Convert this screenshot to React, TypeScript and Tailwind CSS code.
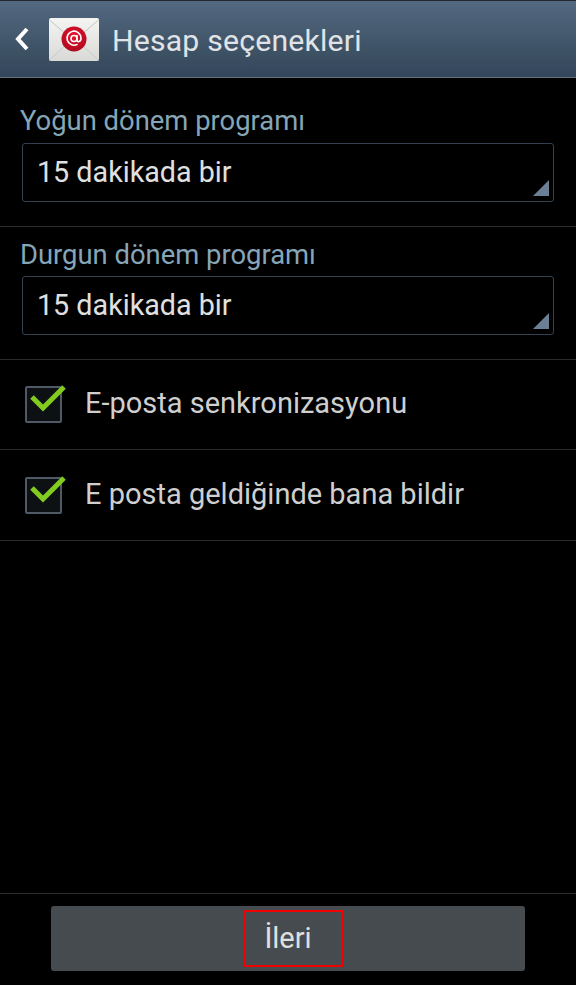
import React from 'react';

function MailIcon() {
  return (
    <svg width="52" height="45" viewBox="0 0 52 45" className="shrink-0">
      <defs>
        <linearGradient id="env" x1="0" y1="0" x2="0" y2="1">
          <stop offset="0" stopColor="#f4f4f3" />
          <stop offset="1" stopColor="#d9d9d7" />
        </linearGradient>
        <radialGradient id="seal" cx="0.5" cy="0.35" r="0.7">
          <stop offset="0" stopColor="#e8112d" />
          <stop offset="1" stopColor="#a80a1e" />
        </radialGradient>
      </defs>
      <rect x="1" y="1" width="50" height="43" rx="2" fill="url(#env)" />
      <path d="M1.5 3 L26 24 L50.5 3" fill="none" stroke="#c4c4c2" strokeWidth="1" />
      <path d="M1.5 43 L19 27 M50.5 43 L33 27" fill="none" stroke="#c9c9c7" strokeWidth="1" />
      <circle cx="26" cy="22" r="12.5" fill="url(#seal)" />
      <circle cx="26" cy="21.5" r="3" fill="none" stroke="#fff" strokeWidth="1.6" />
      <path d="M29 18.5 V23 Q29 25 31 24.5 Q33 24 33 21 A7 7 0 1 0 29 27.5" fill="none" stroke="#fff" strokeWidth="1.6" strokeLinecap="round" />
    </svg>
  );
}

function SpinnerField({ label, value, className, boxMargin }: { label: string; value: string; className: string; boxMargin: string }) {
  return (
    <div className={`border-b border-[#2b2b2b] ${className}`}>
      <div className="pl-5 text-[27.4px] leading-[30px] text-[#86a6b8]">{label}</div>
      <div className={`relative ml-[22px] mr-[22px] flex h-[59px] items-center rounded-[3px] border border-[#33414e] pl-[14px] pt-[1px] text-[28.7px] text-[#e0e0e0] ${boxMargin}`}>
        {value}
        <div className="absolute bottom-[5px] right-[4px] h-4 w-4 bg-[#6b7f97] [clip-path:polygon(100%_0,100%_100%,0_100%)]" />
      </div>
    </div>
  );
}

function CheckRow({ label, className }: { label: string; className: string }) {
  return (
    <div className={`flex items-center border-b border-[#2b2b2b] pl-[25px] ${className}`}>
      <div className="relative h-[37px] w-[37px] rounded-[2px] border-2 border-[#4f5a66] bg-[#0e1114]">
        <svg width="38" height="32" viewBox="0 0 38 32" className="absolute left-[3px] top-[-5px]">
          <path d="M2 14 L13 25 L34 4" fill="none" stroke="#82cc1f" strokeWidth="5" />
        </svg>
      </div>
      <span className="ml-[23px] pb-[1px] text-[29px] text-[#cfcfcf]">{label}</span>
    </div>
  );
}

export default function App() {
  return (
    <div className="flex h-[985px] w-[576px] flex-col overflow-hidden bg-black font-['Roboto',sans-serif]">
      {/* Action bar */}
      <div className="flex h-[78px] shrink-0 items-center border-t border-b border-t-[#22282e] border-b-[#64727f] bg-gradient-to-b from-[#53697f] to-[#33465a] pl-[14px]">
        <svg width="16" height="26" viewBox="0 0 16 26" className="shrink-0">
          <path d="M13 3 L4 13 L13 23" fill="none" stroke="#fff" strokeWidth="4" />
        </svg>
        <div className="ml-[18px]">
          <MailIcon />
        </div>
        <span className="ml-[12px] pt-[3px] text-[30.2px] tracking-[0.2px] text-[#e0e4e6]">Hesap seçenekleri</span>
      </div>

      <SpinnerField label="Yoğun dönem programı" value="15 dakikada bir" className="h-[149px] pt-[28px]" boxMargin="mt-[7px]" />
      <SpinnerField label="Durgun dönem programı" value="15 dakikada bir" className="h-[133px] pt-[13px]" boxMargin="mt-[6px]" />
      <CheckRow label="E-posta senkronizasyonu" className="h-[90px]" />
      <CheckRow label="E posta geldiğinde bana bildir" className="h-[91px]" />

      <div className="flex-1" />

      {/* Bottom button */}
      <div className="flex h-[92px] shrink-0 justify-center border-t border-[#2b2b2b] pt-[12px]">
        <div className="relative flex h-[65px] w-[474px] items-center justify-center rounded-[3px] bg-[#464b4f] text-[29px] text-[#e0e0e0]">
          İleri
          <div className="absolute left-[192px] top-[4px] h-[57px] w-[101px] rounded-[2px] border-2 border-[#f00000]" />
        </div>
      </div>
    </div>
  );
}
